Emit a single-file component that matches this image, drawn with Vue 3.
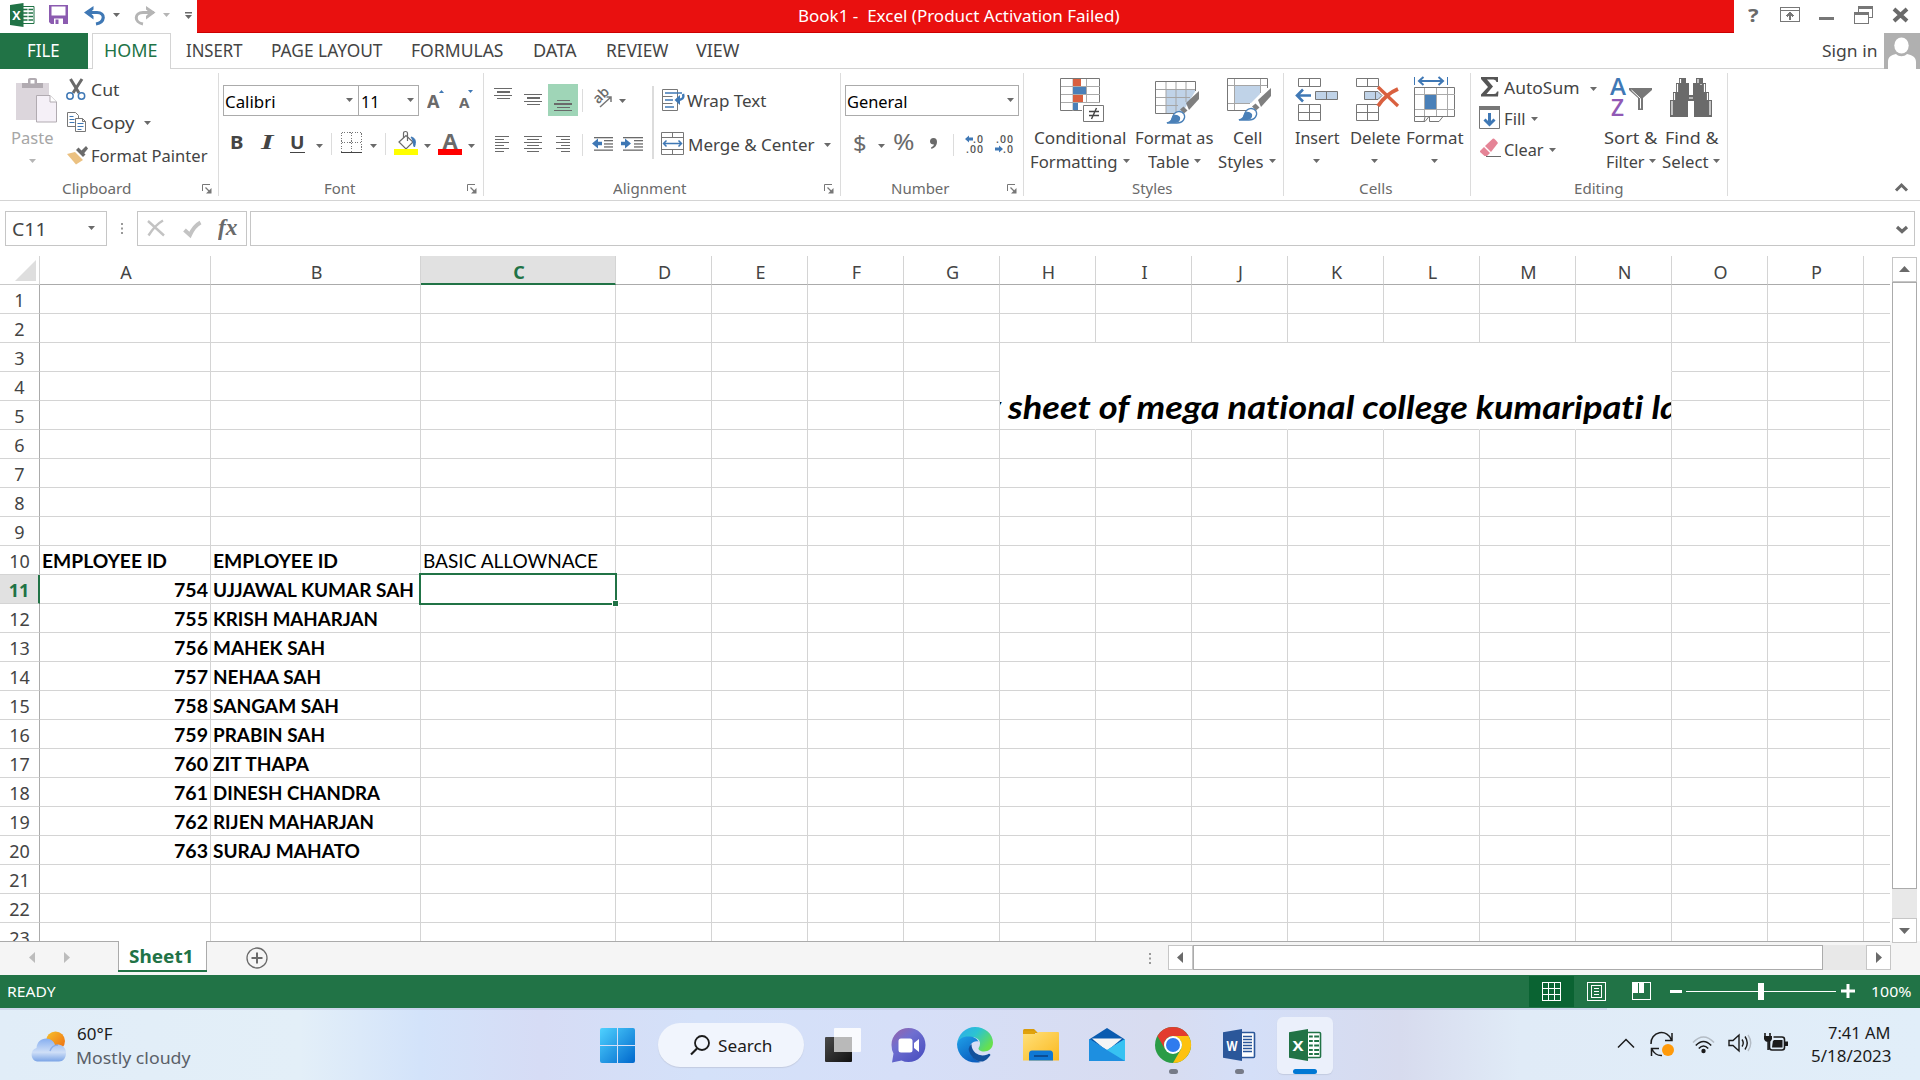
<script setup>
import { h, onMounted, ref } from 'vue'

const root = ref(null)

/* ---------- layout helpers: leaves carry page coordinates, rows and columns turn them into margins ---------- */
const ASC = 1.069
const DESC = 0.293
function T(text, x, w, base, size = 17, cls = '') {
  const a = Math.round(size * ASC)
  const d = Math.round(size * DESC)
  const y = Math.round(base - a - (20 - a - d) / 2)
  // one pixel of side bearing on the left of the ink
  return { kind: 'text', text, x: x - 1, y, w: w + 1.5, h: 20, size, cls }
}
const I = (svg, x, y, w, hh, cls = '') => ({ kind: 'icon', svg, x, y, w, h: hh, cls })
const C = (x, y, cls = '') => I('<path d="M0 0h7L3.5 4z" fill="currentColor"/>', x, y, 7, 4, 'caret ' + cls)
const S = (x, y, hh, w = 1) => ({ kind: 'box', x, y, w, h: hh, cls: 'sep', kids: [] })
function group(dir, kids, cls = '', box) {
  const b = box || {}
  const x = b.x ?? Math.min(...kids.map((k) => k.x))
  const y = b.y ?? Math.min(...kids.map((k) => k.y))
  const w = b.w ?? Math.max(...kids.map((k) => k.x + k.w)) - x
  const hh = b.h ?? Math.max(...kids.map((k) => k.y + k.h)) - y
  return { kind: 'box', dir, kids, cls, x, y, w, h: hh }
}
const H = (...kids) => group('row', kids)
const V = (...kids) => group('col', kids)
const box = (dir, cls, x, y, w, hh, ...kids) => group(dir, kids, cls, { x, y, w, h: hh })

function draw(n, ml, mt) {
  const style = { marginLeft: ml + 'px', marginTop: mt + 'px', width: n.w + 'px', height: n.h + 'px' }
  if (n.kind === 'text') {
    return h('span', { class: ['t', n.cls], style: { ...style, fontSize: n.size + 'px' } }, [
      h('span', { class: 'fit', 'data-w': n.w }, n.text),
    ])
  }
  if (n.kind === 'icon') {
    return h('svg', { class: ['i', n.cls], style, viewBox: `0 0 ${n.w} ${n.h}`, innerHTML: n.svg })
  }
  let cur = n.dir === 'col' ? n.y : n.x
  const kids = n.kids.map((k) => {
    if (n.dir === 'col') {
      const v = draw(k, k.x - n.x, k.y - cur)
      cur = k.y + k.h
      return v
    }
    const v = draw(k, k.x - cur, k.y - n.y)
    cur = k.x + k.w
    return v
  })
  return h('div', { class: ['n', n.dir, n.cls], style }, kids)
}
const Node = (p) => draw(p.of, 0, 0)
Node.props = ['of']

/* ---------- icons ---------- */
const hl = (rows, c = '#6a6a6a') =>
  rows.map(([x, y, w]) => `<rect x="${x}" y="${y}" width="${w}" height="1.3" fill="${c}"/>`).join('')
const officeX = (c, letter, sheet) =>
  `<path d="M18 3.5h12.5a1 1 0 0 1 1 1v23a1 1 0 0 1-1 1H18z" fill="#fff" stroke="${c}" stroke-width="1.6"/>${sheet}<path d="M0 3.2L19 0v32L0 28.8z" fill="${c}"/><text x="9" y="21.5" text-anchor="middle" font-family="Open Sans,sans-serif" font-weight="700" font-size="15" textLength="11" lengthAdjust="spacingAndGlyphs" fill="#fff">${letter}</text>`
const excelSheet = '<path d="M20 7.5h10M20 12h10M20 16.500h10M20 21h10M20 25h10" stroke="#217346" stroke-width="2"/><path d="M24.500 5v22" stroke="#fff" stroke-width="1.4"/>'
const wordSheet = '<path d="M20 7.500h9M20 10.500h9M20 13.500h9M20 16.500h9M20 19.500h9M20 22.500h9" stroke="#2b579a" stroke-width="1.4"/>'
const launcher = '<path d="M.5 7V.5H8" fill="none" stroke="#777"/><path d="M3.500 3.500L7 7" stroke="#777" stroke-width="1.200"/><path d="M9.500 4v5.500H4z" fill="#777"/>'
const brush = '<path d="M31 12L44 0v8L34 19z" fill="#7f7f7f"/><path d="M28.500 15.500l4 4-3.500 3-4-4z" fill="#7f7f7f"/><path d="M12 32c4-1 5-3 6-7 2-5 8-6 11-2 2 4-1 9-7 9z" fill="#fff" stroke="#4a80b8" stroke-width="1.300"/><path d="M11 32c5-1 5-3 6-6 2-3 5-3 8 0 1 5-3 6-6 6z" fill="#4a80b8"/>'
const ic = {
  excel: '<path d="M12 3.500h12v17H12z" fill="#fff" stroke="#217346"/><path d="M13 6.500h10M13 10h10M13 13.500h10M13 17h10" stroke="#217346" stroke-width="1.500"/><path d="M18 4v16" stroke="#fff"/><path d="M0 2l13.500-2v24L0 22z" fill="#217346"/><text x="6.500" y="16.500" text-anchor="middle" font-family="Open Sans,sans-serif" font-weight="700" font-size="12.500" fill="#fff">X</text>',
  save: '<path d="M0 0h19v19H2l-2-2z" fill="#8b5bb0"/><path d="M2.500 1.500h14v9h-14z" fill="#fff"/><path d="M5 13.500h9V19H5z" fill="#fff"/><path d="M6.500 14.500h3V19h-3z" fill="#8b5bb0"/>',
  undo: '<path d="M2 6.500h11c9 0 8 10-1 11.500" fill="none" stroke="#3f78b5" stroke-width="3.200"/><path d="M9.500 0v3.500L6 6.500l3.500 3.500v3.500L0 6.500z" fill="#3f78b5"/>',
  redo: '<path d="M20 6.500H9c-9 0-9 10 0 11.500" fill="none" stroke="#b5b5b5" stroke-width="3"/><path d="M12 0v3.500l3.500 3L12 10v3.500l9.500-7z" fill="#b5b5b5"/>',
  custom: '<path d="M0 0h7v1.500H0zM0 3h7L3.500 7z" fill="#6a6a6a"/>',
  ribbonOpt: '<path d="M.500.500h19v14H.500zM.500 3.500h19" fill="none" stroke="#777"/><path d="M10 13V6M6.500 9.500L10 6l3.500 3.500" fill="none" stroke="#777" stroke-width="2"/>',
  restore: '<path d="M4.500 6V.500h14v11H15" fill="none" stroke="#777"/><path d="M4 1.500h15" stroke="#777" stroke-width="2"/><path d="M.500 6.500h14v11H.500z" fill="#fff" stroke="#777"/><path d="M0 7.500h15" stroke="#777" stroke-width="2"/>',
  close: '<path d="M1 1l13 12M14 1L1 13" stroke="#6a6a6a" stroke-width="4"/>',
  user: '<rect width="36" height="36" fill="#b0b0b0"/><ellipse cx="17.500" cy="12.500" rx="7.200" ry="8" fill="#fff"/><path d="M4 36V29c0-5 3-7 8-8 3 3 8 3 11 0 5 1 9 3 9 8v7z" fill="#fff"/>',
  paste: '<path d="M0 5h33v37H0z" fill="#dcd6dc"/><path d="M6 5h6V1.500Q12 0 14 0h5q2 0 2 1.500V5h6v5H6z" fill="#b1abb1"/><rect x="14.500" y="2" width="4" height="3.500" fill="#fff"/><path d="M20.500 17.500H34l6.500 6.500v20h-20z" fill="#f5f0f7" stroke="#b1abb1"/><path d="M34 17.500V24h6.500" fill="#fff" stroke="#b1abb1"/>',
  cut: '<path d="M4.500 0l8.500 14M16 0L7 14" stroke="#6a6a6a" stroke-width="3"/><circle cx="4" cy="17" r="3.200" fill="#fff" stroke="#3f78b5" stroke-width="1.500"/><circle cx="15.500" cy="17" r="3.200" fill="#fff" stroke="#3f78b5" stroke-width="1.500"/>',
  copy: '<path d="M.500.500h8l3 3v11h-11z" fill="#fff" stroke="#777"/><path d="M2.500 4.500h4M2.500 7.500h5M2.500 10.500h5" stroke="#3f78b5"/><path d="M8.500 6.500h7l3 3v10h-10z" fill="#fff" stroke="#777"/><path d="M15.500 6.500v3h3" fill="none" stroke="#777"/><path d="M10.500 11.500h6M10.500 14.500h6M10.500 17.500h4" stroke="#3f78b5"/>',
  painter: '<path d="M0 8l8-2 8 8-7 4.500z" fill="#ebc181"/><path d="M9 4l2.500-2.500 7 7L16 11z" fill="#6a6a6a"/><path d="M14 5l5-5 2 2.500-4 5z" fill="#6a6a6a"/>',
  up: '<path d="M0 3h5L2.500 0z" fill="#3f78b5"/>',
  down: '<path d="M0 0h5L2.500 3z" fill="#3f78b5"/>',
  borders: '<path d="M.500.500h20v20M.500.500v20M10.500.500v20M.500 10.500h20" fill="none" stroke="#777" stroke-dasharray="1.300 1.300"/><path d="M0 20.500h21" stroke="#444" stroke-width="1.500"/>',
  fill: '<path d="M5 11l7-6.500 7 6.500-7 7z" fill="#fff" stroke="#6a6a6a" stroke-width="1.200"/><path d="M9.500 7V2.500q0-2 2-2t2 2V10" fill="none" stroke="#6a6a6a" stroke-width="1.200"/><path d="M17 6c5 1 5 5 3.500 10-2-2 0-5-3.500-10" fill="#3f78b5" stroke="#3f78b5"/><rect y="18" width="24" height="6" fill="#ff0"/>',
  fontColor: '<text x="12" y="15.500" text-anchor="middle" font-family="Open Sans,sans-serif" font-weight="700" font-size="22" fill="#6a6a6a">A</text><rect y="16" width="24" height="6" fill="#f00"/>',
  alTop: hl([[0, 0, 18], [2.500, 3.300, 13], [0, 6.600, 18], [2.500, 9.600, 13]]),
  alBot: '<rect width="30" height="32" fill="#9fd5b7"/>' + hl([[8.500, 16, 13], [6, 19.300, 18], [8.500, 22.600, 13], [6, 25.600, 18]]),
  alMid: hl([[0, 0, 18], [2.500, 3.300, 13], [0, 6.600, 18], [2.500, 9.600, 13]]),
  left: hl([[0, 0, 14], [0, 3, 9], [0, 6, 14], [0, 9, 9], [0, 12, 14], [0, 15, 9]]),
  center: hl([[0, 0, 18], [3, 3, 12], [0, 6, 18], [3, 9, 12], [0, 12, 18], [3, 15, 12]]),
  right: hl([[0, 0, 14], [5, 3, 9], [0, 6, 14], [5, 9, 9], [0, 12, 14], [5, 15, 9]]),
  orient: '<text x="3" y="14" transform="rotate(-45 6 12)" font-family="Open Sans,sans-serif" font-weight="600" font-size="14" fill="#6a6a6a">ab</text><path d="M7 18L18 8M13.500 8H18v5" fill="none" stroke="#777" stroke-width="1.500"/>',
  dec: hl([[2, 0, 19], [12, 3, 9], [12, 6.300, 9], [12, 9.300, 9], [2, 12.500, 19]]) + '<path d="M0 6.500L6 1.500v3.200h4v3.600H6v3.200z" fill="#3f78b5"/>',
  inc: hl([[2, 0, 20], [13, 3, 9], [13, 6.300, 9], [13, 9.300, 9], [2, 12.500, 20]]) + '<path d="M10 6.500L4 1.500v3.200H0v3.600h4v3.200z" fill="#3f78b5"/>',
  wrap: '<path d="M.500.500h15v21H.500z" fill="#fff" stroke="#777"/><path d="M.500 7.500h10M.500 14.500h10" stroke="#777"/><path d="M3 4h17M3 11h8M3 18h9" stroke="#3f78b5" stroke-width="1.300"/><path d="M21 5q2 6-6 6" fill="none" stroke="#3f78b5" stroke-width="2.400"/><path d="M12.500 11l5.500-5v10z" fill="#3f78b5"/>',
  merge: '<path d="M.500.500h22v22H.500zM.500 5.500h22M.500 17.500h22M11.500.500v5M11.500 17.500v5" fill="#fff" stroke="#777"/><path d="M2.500 11.500h18M5.500 8.500l-3 3 3 3M17.500 8.500l3 3-3 3" fill="none" stroke="#3f78b5" stroke-width="1.500"/>',
  comma: '<path d="M3.500 0Q7 0 7 4 7 9 1.500 11L1 9.500Q4 8 4 6.500 0 6.500 0 3.500 0 0 3.500 0z" fill="#6a6a6a"/>',
  decInc: '<path d="M0 5L4 1.500v2h4v3H4v2z" fill="#3f78b5"/><text x="8" y="8.500" font-family="Open Sans,sans-serif" font-weight="600" font-size="10.500" fill="#555" textLength="10">.0</text><text x="1" y="18.500" font-family="Open Sans,sans-serif" font-weight="600" font-size="10.500" fill="#555" textLength="17">.00</text>',
  decDec: '<text x="1" y="8.500" font-family="Open Sans,sans-serif" font-weight="600" font-size="10.500" fill="#555" textLength="17">.00</text><path d="M8 15L4 11.500v2H0v3h4v2z" fill="#3f78b5"/><text x="8" y="18.500" font-family="Open Sans,sans-serif" font-weight="600" font-size="10.500" fill="#555" textLength="10">.0</text>',
  cond: '<path d="M.500.500h39v32H.500z" fill="#fff" stroke="#777"/><path d="M13 1v32M26.500 1v32M1 8.500h39M1 16.500h39M1 24.500h39" stroke="#aaa"/><path d="M13 1h8v7h-8zM13 17h10v7H13z" fill="#d9603f"/><path d="M13 9h13v7H13zM13 25h5v7h-5z" fill="#4a80b8"/><path d="M22 25h23v20H22z" fill="#fff"/><path d="M23.500 27.500h20v16h-20z" fill="#fff" stroke="#777"/><path d="M29 33.500h10M29 37.500h10M36.500 30l-5 11" stroke="#444" stroke-width="1.400"/>',
  asTable: '<path d="M.500.500h40v32H.500z" fill="#fff"/><path d="M11 9h30L27 32H11z" fill="#c0d3e8"/><path d="M.500 32.500V.500h40V10M.500 32.500h22" fill="none" stroke="#777"/><path d="M11 1v31M21 1v31M31 1v20M1 8.500h39M1 16.500h34M1 24.500h22" stroke="#a5a5a5"/><g transform="translate(0 10)">' + brush + '</g>',
  cellStyle: '<path d="M.500.500h40v32H.500z" fill="#fff"/><path d="M8 8h25v8L24 25H8z" fill="#c0d3e8"/><path d="M.500 32.500V.500h40V10M.500 32.500h20" fill="none" stroke="#777"/><path d="M7.500 1v31M33.500 1v14M1 7.500h39M1 25.500h22" stroke="#a5a5a5"/><g transform="translate(0 10)">' + brush + '</g>',
  insert: '<path d="M3.500.500h22v8h-22zM14.500.500v8M3.500 26.500h22v16h-22zM14.500 26.500v16M3.500 34.500h22" fill="#fff" stroke="#777"/><path d="M20.500 13.500h22v8h-22zM31.500 13.500v8" fill="#c0d3e8" stroke="#777"/><path d="M2 17.500h14M8 11.500l-6 6 6 6" fill="none" stroke="#3f78b5" stroke-width="2.600"/>',
  del: '<path d="M.500.500h22v8H.500zM11.500.500v8M.500 26.500h22v16H.500zM11.500 26.500v16M.500 34.500h22" fill="#fff" stroke="#777"/><path d="M8.500 13.500H22l4 4-4 4H8.500zM19.500 13.500v8" fill="#c0d3e8" stroke="#777"/><path d="M22 9L42 28" stroke="#d9603f" stroke-width="3.200"/><path d="M42 11Q30 16 22 28" fill="none" stroke="#d9603f" stroke-width="4"/>',
  format: '<path d="M.500 0v8M33.500 0v8" stroke="#3f78b5"/><path d="M5 4h24M9.500 0l-4.500 4 4.500 4M24.500 0l4.500 4-4.500 4" fill="none" stroke="#3f78b5" stroke-width="2"/><path d="M.500 10.500h40v29H.500z" fill="#fff" stroke="#777"/><path d="M10.500 11v28M22.500 11v28M33.500 11v28M1 17.500h40M1 32.500h40" stroke="#aaa"/><rect x="11" y="18" width="11" height="14" fill="#4a80b8"/><path d="M.500 40v4.500H11l4-5M11 40l-1 4.500h-3M15.500 40v4.500H25l4-5" fill="none" stroke="#777"/>',
  sigma: '<path d="M0 0h17v5h-1.500q-.500-2.500-3-2.500H6l6 7L5.500 17H13q2.500 0 3-2.500H17.500L17 19.500H0v-2l7-7.500L0 2z" fill="#555"/>',
  fillDown: '<path d="M.500.500h20v22H.500z" fill="#fff" stroke="#777"/><rect width="21" height="4" fill="#777"/><path d="M10.500 7v12M5.500 13.500l5 5 5-5" fill="none" stroke="#3f78b5" stroke-width="3"/>',
  clear: '<path d="M1 13l4-4 6 6-3 3H5.500L1 14z" fill="#e58496"/><path d="M6 8l8-7.500q1.500-.500 5 4.500L12 14z" fill="#e58496"/><path d="M7 18.500h15" stroke="#6a6a6a"/>',
  sort: '<text x="0" y="17" font-family="Open Sans,sans-serif" font-weight="600" font-size="23.500" fill="#3f78b5" textLength="16" lengthAdjust="spacingAndGlyphs">A</text><text x="1" y="38" font-family="Open Sans,sans-serif" font-weight="600" font-size="23.500" fill="#9159b5" textLength="13" lengthAdjust="spacingAndGlyphs">Z</text><path d="M19 10h23v2l-9 8v12h-5V20l-9-8z" fill="#777"/><path d="M21.500 12l9 8.500v10" fill="none" stroke="#fff"/>',
  find: '<path d="M9 0h7v5h3v11h4V5h3V0h7v5h3v9h3v8h3v17H24V23h-6v16H0V22h3v-8h3V5h3z" fill="#6a6a6a"/><path d="M10.500 1v4M7.500 6v8M4.500 15v7M2 23v14M28 1v4M31 6v1M34.500 6v8M37.500 15v7M40 23v14M19 16.500h4M19 20h4" stroke="#fff" stroke-width="1.200"/>',
  chevUp: '<path d="M1 8.500L6.500 3 12 8.500" fill="none" stroke="#6a6a6a" stroke-width="3"/>',
  chevDown: '<path d="M1 1l5 4.500L11 1" fill="none" stroke="#6a6a6a" stroke-width="3.200"/>',
  dots: '<path d="M0 0h2v2H0zM0 4.500h2v2H0zM0 9h2v2H0z" fill="#999"/>',
  cancel: '<path d="M1 1l16 14.500M16 .500Q8 5 1.500 15.500" stroke="#c3c3c3" stroke-width="2.400" fill="none"/>',
  check: '<path d="M1.500 9l5.500 5Q11 5 17.500 1.500" stroke="#c3c3c3" stroke-width="4" fill="none"/>',
  corner: '<path d="M21 0v21H0z" fill="#dedede"/>',
  tl: '<path d="M6 0v11L0 5.500z" fill="currentColor"/>',
  tr: '<path d="M0 0v11l6-5.500z" fill="currentColor"/>',
  plus: '<circle cx="11" cy="11" r="10" fill="none" stroke="#6a6a6a" stroke-width="1.300"/><path d="M11 5.500v11M5.500 11h11" stroke="#6a6a6a" stroke-width="2"/>',
  vNormal: '<path d="M.500.500h18v18H.500zM6.500.500v18M12.500.500v18M.500 6.500h18M.500 12.500h18" fill="none" stroke="#fff"/>',
  vPage: '<path d="M.500.500h18v18H.500zM4.500 3.500h10v12h-10zM7 6.500h5M7 9.500h5M7 12.500h5" fill="none" stroke="#fff"/>',
  vBreak: '<path d="M.500.500h18v17H.500z" fill="none" stroke="#fff"/><path d="M0 0h5.500v11H0zM6.500 0H12v11H6.500z" fill="#fff"/>',
  weather: '<defs><linearGradient id="wc" x1="0" y1="0" x2="0" y2="1"><stop offset="0" stop-color="#86aef0"/><stop offset=".6" stop-color="#cfdff7"/><stop offset="1" stop-color="#7ba4e6"/></linearGradient><linearGradient id="ws" x1="0" y1="0" x2="1" y2="1"><stop offset="0" stop-color="#f7c32e"/><stop offset="1" stop-color="#ee6a10"/></linearGradient></defs><circle cx="25.500" cy="10" r="9.500" fill="url(#ws)"/><path d="M7 30.500a7 7 0 0 1-.500-13.500C7 11 11 7.500 16 7.500c5 0 8 3 9 6.500 6-2 11 2 11 8 0 5-3 8.500-7 8.500z" fill="url(#wc)"/><path d="M20 20q2-6 8-6" stroke="#6f98e2" stroke-width="1.500" fill="none" opacity=".6"/>',
  win: '<defs><linearGradient id="wn" gradientUnits="userSpaceOnUse" x1="0" y1="0" x2="35" y2="35"><stop offset="0" stop-color="#4fd2ff"/><stop offset="1" stop-color="#0067cc"/></linearGradient></defs><path d="M2 0h15v17H0V2q0-2 2-2zM18 0h15q2 0 2 2v15H18zM0 18h17v17H2q-2 0-2-2zM18 18h17v15q0 2-2 2H18z" fill="url(#wn)"/>',
  mag: '<circle cx="12" cy="8" r="7" fill="none" stroke="#1b1b1b" stroke-width="1.800"/><path d="M7 13.500L1 19.500" stroke="#1b1b1b" stroke-width="2.200"/>',
  taskView: '<defs><linearGradient id="tv" x1="0" y1="0" x2="1" y2="1"><stop offset="0" stop-color="#4a4a4a"/><stop offset="1" stop-color="#111"/></linearGradient></defs><rect y="9" width="27" height="25" rx="1" fill="url(#tv)"/><rect x="9" width="27" height="24" rx="1" fill="#fff" opacity=".85"/><rect x="9" y="9" width="18" height="15" fill="#b9b9b9"/>',
  chat: '<defs><linearGradient id="ch" x1="0" y1="0" x2=".8" y2="1"><stop offset="0" stop-color="#9d62a6"/><stop offset=".4" stop-color="#6f6fd0"/><stop offset="1" stop-color="#4a4fc0"/></linearGradient></defs><path d="M17.500 0C27 0 34.500 7.500 34.500 17S27 34 17.500 34q-4 0-7-1.500L1 34.500l1.500-9Q.500 22 .500 17C.500 7.500 8 0 17.500 0z" fill="url(#ch)"/><rect x="7.500" y="10.500" width="14" height="14" rx="2.500" fill="#fff"/><path d="M23 15l5-4v13l-5-4z" fill="#fff"/>',
  edge: '<defs><linearGradient id="e1" x1="0" y1="0" x2="1" y2=".6"><stop offset="0" stop-color="#2fa8ee"/><stop offset=".5" stop-color="#2cc3d2"/><stop offset="1" stop-color="#67e04e"/></linearGradient><linearGradient id="e2" x1="0" y1="0" x2=".6" y2="1"><stop offset="0" stop-color="#1fa0e8"/><stop offset="1" stop-color="#0b5fc0"/></linearGradient></defs><path d="M0 17C1 7 9 0 18 0c10 0 18 7 18 15.500 0 6-4.500 9-9 9-4 0-5.500-1.800-5.500-3 0-1 1.500-2 1.500-5C23 13 20 10 14 10 7 10 1 13 0 17z" fill="url(#e1)"/><path d="M0 17C1 12 6 9.500 11 9.500c6 0 9 2 10.500 5-6-1-9 3-8.500 8 .500 6 5 11 11 12.500C11 38 0 29 0 17z" fill="url(#e2)"/><path d="M14.500 17q-5 4-1 10.500 5 8 12.500 7 4-1.500 7.500-6.500-1-2-3-.500-7 2.500-12-1.500-4-3.500-4-9z" fill="#12509c"/>',
  folder: '<defs><linearGradient id="fo" x1="0" y1="0" x2="1" y2="1"><stop offset="0" stop-color="#ffe07a"/><stop offset="1" stop-color="#fbb91f"/></linearGradient></defs><path d="M0 1.500Q0 0 1.500 0H11l4 4H0z" fill="#d99b0b"/><path d="M0 5h12l4-2h19q1 0 1 1v27.500H0z" fill="url(#fo)"/><path d="M0 5V2h13l-1 3z" fill="#e0a20d"/><path d="M6 31.500V25q0-3.500 3-3.500h18q3 0 3 3.500v6.500z" fill="#0f78d4"/><path d="M11 27h14" stroke="#0b4d94" stroke-width="2"/>',
  mail: '<path d="M0 11.500L18 0l18 11.500L18 22z" fill="#0a5bb0"/><path d="M3 10.500h30L18 23z" fill="#f5f5f5"/><path d="M0 11l18 11 18-11v22H0z" fill="#2196e0"/><path d="M0 11l36 22H0z" fill="#1e8fe0"/><path d="M18 22l18-11v22z" fill="#37c2f2"/>',
  chrome: '<circle cx="18" cy="18" r="18" fill="#2a9c46"/><path d="M2.400 9A18 18 0 0 1 33.600 9H18a9 9 0 0 0-7.800 13.500z" fill="#e33b2e"/><path d="M33.600 9A18 18 0 0 1 18 36l7.800-13.500A9 9 0 0 0 25.800 13.500L18 9z" fill="#fdc20f"/><circle cx="18" cy="18" r="9" fill="#fff"/><circle cx="18" cy="18" r="7" fill="#2f7bee"/>',
  word: officeX('#2b579a', 'W', wordSheet),
  excelBig: officeX('#217346', 'X', excelSheet),
  trayUp: '<path d="M1 9.500L9 1.500l8 8" fill="none" stroke="#1b1b1b" stroke-width="1.500"/>',
  sync: '<path d="M1 12A10.500 10.500 0 0 1 21.500 8M22 1v7.500h-7M12 23.500A10 10 0 0 1 2 17M1.500 24v-7.500H9" fill="none" stroke="#1b1b1b" stroke-width="1.500"/><circle cx="18" cy="18" r="6" fill="#ff9a0a"/>',
  wifi: '<g fill="none" stroke-width="1.600"><path d="M1 7.500q10.500-11 21 0" stroke="#b4bcc5"/><path d="M3.800 10.500q7.700-8 15.400 0M6.800 13.500q4.700-5 9.400 0" stroke="#1b1b1b"/></g><circle cx="11.500" cy="16" r="2.200" fill="#1b1b1b"/>',
  sound: '<path d="M1 6.500h4L11 1v16l-6-5.500H1z" fill="none" stroke="#1b1b1b" stroke-width="1.400"/><path d="M14 5.500q2.500 3.500 0 7M17 2.500q4.500 6.500 0 13" fill="none" stroke="#1b1b1b" stroke-width="1.400"/><path d="M20 1q5.500 8 0 16" fill="none" stroke="#b4bcc5" stroke-width="1.400"/>',
  battery: '<rect x="5.500" y="4" width="15" height="13" rx="2.500" fill="none" stroke="#1b1b1b" stroke-width="1.600"/><path d="M9 7h9.500v7.500H8z" fill="#1b1b1b"/><path d="M21 8.500h3v4.500h-3z" fill="#1b1b1b"/><path d="M-.500 2h10v6H-.500z" fill="#e3edf8"/><path d="M1 0v3M6 0v3" stroke="#1b1b1b" stroke-width="1.600"/><path d="M0 3h8v3q-1 3-4 3t-4-3zM3.300 9h1.600v8H3.300z" fill="#1b1b1b"/>',
}

/* ---------- bars ---------- */
const titlebar = box('row', 'titlebar', 0, 0, 1920, 33,
  I(ic.excel, 10, 3, 24, 24), I(ic.save, 49, 5, 19, 19), I(ic.undo, 84, 6, 23, 19), C(113, 13), I(ic.redo, 134, 6, 22, 19), C(163, 13, 'dim'),
  I(ic.custom, 185, 12, 7, 7),
  box('row', 'red', 197, 0, 1537, 33, T('Book1 -  Excel (Product Activation Failed)', 799, 320, 22, 16, 'white')),
  T('?', 1749, 9, 22, 18, 'bold grey'), I(ic.ribbonOpt, 1780, 7, 20, 15, 'crisp'), box('row', 'minbar', 1819, 17, 15, 3), I(ic.restore, 1854, 6, 20, 19, 'crisp'),
  I(ic.close, 1893, 8, 15, 14))

const tabs = box('row', 'tabs', 0, 33, 1920, 36,
  box('row', 'file', 0, 33, 88, 36, T('FILE', 28, 31, 57, 18, 'white')),
  box('row', 'home', 92, 33, 79, 36, T('HOME', 105, 52, 57, 18, 'green')),
  T('INSERT', 187, 55, 57, 18), T('PAGE LAYOUT', 272, 110, 57, 18), T('FORMULAS', 412, 91, 57, 18), T('DATA', 534, 42, 57, 18),
  T('REVIEW', 607, 61, 57, 18), T('VIEW', 697, 42, 57, 18),
  T('Sign in', 1823, 54, 57, 17), I(ic.user, 1884, 33, 36, 36))

const L = (t, x, w) => T(t, x, w, 194, 15, 'label')
const launch = (x) => I(launcher, x, 184, 10, 10)

const ribbon = box('row', 'ribbon', 0, 69, 1920, 132,
  // Clipboard
  V(
    H(
      V(I(ic.paste, 16, 78, 41, 45), T('Paste', 12, 41, 144, 17, 'dimtext'), C(29, 159, 'dim')),
      V(
        H(I(ic.cut, 66, 79, 20, 21), T('Cut', 92, 27, 96)),
        H(I(ic.copy, 67, 112, 19, 20), T('Copy', 92, 42, 129), C(144, 121)),
        H(I(ic.painter, 67, 146, 21, 19), T('Format Painter', 92, 115, 162)),
      ),
    ),
    H(L('Clipboard', 63, 68), launch(202)),
  ),
  S(218, 73, 123),
  // Font
  V(
    H(
      box('row', 'combo', 223, 85, 136, 31, T('Calibri', 226, 49, 108, 17, 'black'), C(346, 98)),
      box('row', 'combo second', 358, 85, 61, 31, T('11', 362, 17, 108, 17, 'black'), C(407, 98)),
      T('A', 428, 11, 108, 17, 'bold grey'), I(ic.up, 439, 90, 5, 3), T('A', 460, 9, 108, 14, 'bold grey'), I(ic.down, 468, 90, 5, 3),
    ),
    H(
      T('B', 231, 12, 149, 18, 'bold'), T('I', 262, 11, 149, 20, 'ital'), T('U', 291, 13, 149, 18, 'bold under'), C(316, 144), S(331, 133, 22),
      I(ic.borders, 341, 132, 21, 21, 'crisp'), C(370, 144), S(385, 133, 22), I(ic.fill, 394, 131, 24, 24), C(424, 144),
      I(ic.fontColor, 438, 133, 24, 22), C(468, 144),
    ),
    H(L('Font', 325, 30), launch(467)),
  ),
  S(483, 73, 123),
  // Alignment
  V(
    H(
      V(
        H(I(ic.alTop, 494, 88, 18, 11, 'crisp'), I(ic.alMid, 524, 94, 18, 11, 'crisp'), I(ic.alBot, 548, 84, 30, 32, 'crisp'), S(582, 89, 23), I(ic.orient, 593, 89, 20, 20), C(619, 99)),
        H(I(ic.left, 495, 136, 14, 17, 'crisp'), I(ic.center, 524, 136, 18, 17, 'crisp'), I(ic.right, 556, 136, 14, 17, 'crisp'), S(582, 134, 22), I(ic.dec, 592, 137, 21, 14), I(ic.inc, 621, 137, 22, 14)),
      ),
      S(652, 86, 73, 2),
      V(
        H(I(ic.wrap, 662, 89, 23, 23), T('Wrap Text', 688, 78, 107)),
        H(I(ic.merge, 661, 132, 23, 23), T('Merge & Center', 689, 125, 151), C(824, 143)),
      ),
    ),
    H(L('Alignment', 614, 72), launch(824)),
  ),
  S(840, 73, 123),
  // Number
  V(
    box('row', 'combo', 845, 85, 174, 31, T('General', 848, 59, 108, 17, 'black'), C(1007, 98)),
    H(T('$', 854, 12, 151, 22, 'grey'), C(878, 144), T('%', 894, 20, 150, 21, 'grey'), I(ic.comma, 930, 138, 7, 11), S(953, 134, 22), I(ic.decInc, 965, 134, 19, 20), I(ic.decDec, 995, 134, 19, 20)),
    H(L('Number', 892, 57), launch(1007)),
  ),
  S(1023, 73, 123),
  // Styles
  V(
    H(
      V(I(ic.cond, 1060, 78, 45, 45), T('Conditional', 1035, 91, 144), H(T('Formatting', 1031, 86, 168), C(1123, 159))),
      V(I(ic.asTable, 1155, 81, 45, 43), T('Format as', 1136, 77, 144), H(T('Table', 1149, 40, 168), C(1194, 159))),
      V(I(ic.cellStyle, 1227, 78, 45, 43), T('Cell', 1234, 28, 144), H(T('Styles', 1219, 44, 168), C(1269, 159))),
    ),
    L('Styles', 1133, 39),
  ),
  S(1283, 73, 123),
  // Cells
  V(
    H(
      V(I(ic.insert, 1295, 78, 44, 43), T('Insert', 1296, 43, 144), C(1313, 159)),
      V(I(ic.del, 1356, 78, 44, 43), T('Delete', 1351, 49, 144), C(1371, 159)),
      V(I(ic.format, 1414, 77, 42, 45), T('Format', 1407, 56, 144), C(1431, 159)),
    ),
    L('Cells', 1360, 32),
  ),
  S(1470, 73, 123),
  // Editing
  V(
    H(
      V(
        H(I(ic.sigma, 1481, 77, 18, 20), T('AutoSum', 1505, 74, 94), C(1590, 87)),
        H(I(ic.fillDown, 1479, 106, 21, 23), T('Fill', 1505, 20, 125), C(1531, 117)),
        H(I(ic.clear, 1479, 138, 22, 20), T('Clear', 1505, 38, 156), C(1549, 148)),
      ),
      V(I(ic.sort, 1610, 78, 42, 39), T('Sort &', 1605, 52, 144), H(T('Filter', 1607, 37, 168), C(1649, 159))),
      V(I(ic.find, 1670, 78, 42, 39), T('Find &', 1666, 52, 144), H(T('Select', 1663, 45, 168), C(1713, 159))),
    ),
    L('Editing', 1575, 48),
  ),
  S(1727, 73, 123),
  I(ic.chevUp, 1895, 182, 13, 11))

const formula = box('row', 'formula', 0, 201, 1920, 55,
  box('row', 'field', 5, 211, 102, 35, T('C11', 13, 33, 236, 18), C(88, 226)),
  I(ic.dots, 121, 223, 2, 11),
  box('row', 'field', 137, 211, 110, 35, I(ic.cancel, 147, 220, 18, 16), I(ic.check, 183, 221, 19, 16), T('fx', 219, 18, 236, 24, 'fx')),
  box('row', 'field', 250, 211, 1665, 35, I(ic.chevDown, 1896, 226, 12, 8)))

/* ---------- sheet ---------- */
const cols = 'ABCDEFGHIJKLMNOPQ'.split('').map((n) => ({ n, w: { A: 171, B: 210, C: 195, Q: 27 }[n] || 96 }))
const names = [
  ['754', 'UJJAWAL KUMAR SAH', 201], ['755', 'KRISH MAHARJAN', 165], ['756', 'MAHEK SAH', 112], ['757', 'NEHAA SAH', 108],
  ['758', 'SANGAM SAH', 126], ['759', 'PRABIN SAH', 112], ['760', 'ZIT THAPA', 96], ['761', 'DINESH CHANDRA', 167],
  ['762', 'RIJEN MAHARJAN', 161], ['763', 'SURAJ MAHATO', 147],
]
const cellText = { A10: ['EMPLOYEE ID', 125, 'b'], B10: ['EMPLOYEE ID', 125, 'b'], C10: ['BASIC ALLOWNACE', 175, ''] }
names.forEach(([id, name, w], i) => {
  cellText['A' + (11 + i)] = [id, 34, 'b num']
  cellText['B' + (11 + i)] = [name, w, 'b']
})
const rows = Array.from({ length: 23 }, (_, i) => i + 1)
const inMerge = (c, r) => r >= 3 && r <= 5 && c >= 'H' && c <= 'N'

const sheetbar = box('row', 'sheetbar', 0, 941, 1920, 34,
  I(ic.tl, 29, 952, 6, 11, 'faint'), I(ic.tr, 64, 952, 6, 11, 'faint'),
  box('row', 'sheettab', 118, 941, 89, 31, T('Sheet1', 130, 63, 963, 18, 'bold green')),
  I(ic.plus, 246, 947, 22, 22),
  I(ic.dots, 1149, 953, 2, 11),
  box('row', 'sbtn', 1168, 945, 25, 25, I(ic.tl, 1177, 952, 6, 11)),
  box('row', 'thumb', 1193, 945, 630, 25),
  box('row', 'track', 1823, 945, 43, 25),
  box('row', 'sbtn', 1866, 945, 25, 25, I(ic.tr, 1876, 952, 6, 11)))

const vscroll = box('col', 'vscroll', 1890, 256, 30, 685,
  box('row', 'sbtn', 1892, 257, 25, 25, I('<path d="M0 6h11L5.500 0z" fill="currentColor"/>', 1899, 266, 11, 6)),
  box('row', 'thumb', 1892, 282, 25, 607),
  box('row', 'track', 1892, 889, 25, 29),
  box('row', 'sbtn', 1892, 918, 25, 25, I('<path d="M0 0h11L5.500 6z" fill="currentColor"/>', 1899, 928, 11, 6)))

const status = box('row', 'status', 0, 975, 1920, 33,
  T('READY', 8, 47, 997, 15, 'white'),
  box('row', 'viewon', 1529, 976, 45, 31, I(ic.vNormal, 1542, 982, 19, 19, 'crisp')),
  I(ic.vPage, 1587, 982, 19, 19, 'crisp'), I(ic.vBreak, 1632, 982, 19, 18, 'crisp'),
  box('row', 'wh', 1670, 990, 12, 3), box('row', 'wh', 1686, 991, 72, 1), box('row', 'wh', 1758, 983, 6, 17), box('row', 'wh', 1764, 991, 72, 1),
  I('<path d="M7 0v14M0 7h14" stroke="#fff" stroke-width="3"/>', 1841, 984, 14, 14), T('100%', 1872, 39, 997, 15, 'white'))

const taskbar = box('row', 'taskbar', 0, 1008, 1920, 72,
  I(ic.weather, 30, 1031, 36, 31),
  V(T('60°F', 78, 34, 1040, 17, 'ink'), T('Mostly cloudy', 77, 113, 1064, 17, 'soft')),
  I(ic.win, 600, 1028, 35, 35),
  box('row', 'pill', 658, 1023, 146, 44, I(ic.mag, 690, 1035, 20, 21), T('Search', 719, 53, 1052, 17, 'ink')),
  I(ic.taskView, 825, 1028, 36, 34), I(ic.chat, 891, 1028, 35, 35), I(ic.edge, 957, 1027, 36, 36), I(ic.folder, 1023, 1029, 36, 32),
  I(ic.mail, 1089, 1028, 36, 33),
  V(I(ic.chrome, 1155, 1027, 36, 36), box('row', 'dot', 1169, 1069, 9, 5)),
  V(I(ic.word, 1223, 1029, 32, 32), box('row', 'dot', 1235, 1069, 9, 5)),
  box('col', 'active', 1277, 1017, 56, 57, I(ic.excelBig, 1289, 1029, 32, 32), box('row', 'dot blue', 1293, 1069, 24, 5)),
  I(ic.trayUp, 1617, 1038, 18, 11), I(ic.sync, 1650, 1032, 25, 25), I(ic.wifi, 1692, 1035, 23, 19), I(ic.sound, 1728, 1034, 24, 19),
  I(ic.battery, 1764, 1033, 24, 19),
  V(T('7:41 AM', 1829, 61, 1039, 17, 'ink'), T('5/18/2023', 1812, 79, 1062, 17, 'ink')))

/* Squeeze each string to its designed width. */
onMounted(() => {
  root.value.querySelectorAll('.fit').forEach((el) => {
    const w = el.getBoundingClientRect().width
    if (w) el.style.transform = `scaleX(${Number(el.dataset.w) / w})`
  })
})
</script>

<template>
  <main ref="root" class="app">
    <Node :of="titlebar" />
    <Node :of="tabs" />
    <Node :of="ribbon" />
    <Node :of="formula" />
    <section class="sheet">
      <div class="grid">
        <div class="line heads">
          <div class="corner"><svg width="21" height="21" viewBox="0 0 21 21" v-html="ic.corner" /></div>
          <div v-for="c in cols" :key="c.n" class="head" :class="{ on: c.n === 'C' }" :style="{ width: c.w + 'px' }">
            {{ c.n === 'Q' ? '' : c.n }}
          </div>
        </div>
        <div v-for="r in rows" :key="r" class="line">
          <div class="rowno" :class="{ on: r === 11 }">{{ r }}</div>
          <div
            v-for="c in cols"
            :key="c.n"
            class="cell"
            :class="{
              noright: inMerge(c.n, r) && c.n !== 'N',
              nobottom: inMerge(c.n, r) && r < 5,
            }"
            :style="{ width: c.w + 'px' }"
          >
            <span v-if="cellText[c.n + r]" class="val" :class="cellText[c.n + r][2]" :style="{ width: cellText[c.n + r][1] + 'px' }">
              <span class="fit" :data-w="cellText[c.n + r][1]">{{ cellText[c.n + r][0] }}</span>
            </span>
            <span v-if="c.n === 'C' && r === 11" class="select"><i></i></span>
            <span v-if="c.n === 'H' && r === 3" class="merged">
              <span class="fit" data-w="696">y sheet of mega national college kumaripati la</span>
            </span>
          </div>
        </div>
      </div>
      <Node :of="vscroll" />
    </section>
    <Node :of="sheetbar" />
    <Node :of="status" />
    <Node :of="taskbar" />
  </main>
</template>

<style>
html,
body {
  margin: 0;
  background: #fff;
}
</style>

<style scoped>
.app {
  width: 1920px;
  height: 1080px;
  overflow: hidden;
  display: flex;
  flex-direction: column;
  background: #fff;
  color: #444;
  font-family: "Noto Sans", "Open Sans", sans-serif;
  font-variant-ligatures: none;
}
.app :deep(.n) {
  display: flex;
  flex: none;
  box-sizing: border-box;
  align-items: flex-start;
}
.app :deep(.col) {
  flex-direction: column;
}
.app :deep(.t) {
  flex: none;
  display: block;
  line-height: 20px;
  white-space: pre;
}
.app :deep(.fit) {
  display: inline-block;
  white-space: pre;
  transform-origin: 0 50%;
}
.app :deep(.i) {
  flex: none;
  display: block;
  overflow: visible;
  color: #6a6a6a;
}
.app :deep(.crisp) {
  shape-rendering: crispEdges;
}
.app :deep(.i.dim) {
  color: #b5b5b5;
}
.app :deep(.i.faint) {
  color: #bcbcbc;
}
.app :deep(.sep) {
  background: #dcdcdc;
}
.app :deep(.white) {
  color: #fff;
}
.app :deep(.black) {
  color: #000;
}
.app :deep(.green) {
  color: #217346;
}
.app :deep(.grey) {
  color: #6a6a6a;
}
.app :deep(.dimtext) {
  color: #a6a6a6;
}
.app :deep(.label) {
  color: #6a6a6a;
}
.app :deep(.ink) {
  color: #1b1b1b;
}
.app :deep(.soft) {
  color: #5a6068;
}
.app :deep(.bold) {
  font-weight: 700;
}
.app :deep(.ital) {
  font-family: "Liberation Serif", serif;
  font-style: italic;
  font-weight: 700;
}
.app :deep(.fx) {
  font-family: "Liberation Serif", serif;
  font-style: italic;
  font-weight: 700;
  color: #6a6a6a;
}
.app :deep(.under) {
  border-bottom: 1px solid #444;
}
.app :deep(.red) {
  background: #e9100f;
  border-bottom: 1px solid #c00;
}
.app :deep(.minbar) {
  background: #777;
}
.app :deep(.tabs) {
  background: linear-gradient(#d4d4d4, #d4d4d4) 0 100% / 100% 1px no-repeat;
}
.app :deep(.file) {
  background: #217346;
}
.app :deep(.home) {
  background: #fff;
  box-shadow: inset 1px 1px #d4d4d4, inset -1px 0 #d4d4d4;
}
.app :deep(.ribbon) {
  border-bottom: 1px solid #d4d4d4;
}
.app :deep(.combo) {
  box-shadow: inset 0 0 0 1px #ababab;
}
.app :deep(.field) {
  box-shadow: inset 0 0 0 1px #c6c6c6;
}
.sheet {
  display: flex;
  height: 685px;
  flex: none;
  position: relative;
}
.grid {
  width: 1890px;
  height: 685px;
  overflow: hidden;
  flex: none;
}
.line {
  display: flex;
  height: 29px;
}
.corner,
.rowno,
.head,
.cell {
  box-sizing: border-box;
  flex: none;
}
.corner {
  width: 40px;
  padding: 4px 0 0 15px;
  border-right: 1px solid #d4d4d4;
  border-bottom: 1px solid #c9c9c9;
}
.head {
  font-size: 18px;
  line-height: 32px;
  padding-left: 2px;
  text-align: center;
  border-right: 1px solid #d4d4d4;
  border-bottom: 1px solid #ababab;
}
.head.on {
  background: #e1e1e1;
  color: #217346;
  font-weight: 700;
  border-bottom: 2px solid #217346;
}
.rowno {
  width: 40px;
  font-size: 18px;
  line-height: 30px;
  text-align: center;
  border-right: 1px solid #ababab;
  border-bottom: 1px solid #d4d4d4;
}
.rowno.on {
  background: #e1e1e1;
  color: #217346;
  font-weight: 700;
  border-right: 2px solid #217346;
}
.cell {
  position: relative;
  border-right: 1px solid #d4d4d4;
  border-bottom: 1px solid #d4d4d4;
}
.cell:last-child {
  border-right-color: #ababab;
}
.noright {
  border-right-color: transparent;
}
.nobottom {
  border-bottom-color: transparent;
}
.val {
  display: block;
  margin-left: 2px;
  font: 400 19px/29px Lato, sans-serif;
  color: #000;
  white-space: nowrap;
}
.val.b {
  font-weight: 700;
}
.val.num {
  margin-left: auto;
  margin-right: 2px;
}
.select {
  position: absolute;
  left: -2px;
  top: -2px;
  width: 194px;
  height: 28px;
  border: 2px solid #217346;
  z-index: 2;
}
.select i {
  position: absolute;
  right: -3px;
  bottom: -3px;
  width: 5px;
  height: 5px;
  background: #217346;
  box-shadow: 0 0 0 1px #fff;
}
.merged {
  position: absolute;
  left: 0;
  top: 0;
  width: 671px;
  height: 86px;
  overflow: hidden;
  z-index: 2;
  font: italic 700 32px/40px Lato, sans-serif;
  font-variant-ligatures: none;
  color: #000;
  padding-top: 44px;
  box-sizing: border-box;
}
.merged .fit {
  margin-left: -17px;
}
.app :deep(.vscroll) {
  background: #fff;
}
.app :deep(.sbtn) {
  background: #fff;
  box-shadow: inset 0 0 0 1px #c6c6c6;
}
.app :deep(.thumb) {
  background: #fff;
  box-shadow: inset 0 0 0 1px #ababab;
}
.app :deep(.track) {
  background: #e8e8e8;
}
.app :deep(.sheetbar) {
  background: linear-gradient(90deg, #ababab 1890px, #f5f5f5 1890px) 0 0 / 100% 1px no-repeat, #f5f5f5;
}
.app :deep(.sheettab) {
  background: #fff;
  box-shadow: inset 1px 0 #ababab, inset -1px 0 #ababab;
  border-bottom: 2px solid #217346;
}
.app :deep(.status) {
  background: #217346;
}
.app :deep(.viewon) {
  background: #0a6332;
}
.app :deep(.wh) {
  background: #fff;
}
.app :deep(.taskbar) {
  background:
    linear-gradient(90deg, rgba(190, 195, 225, 0.5) 1607px, transparent 1607px) 0 0 / 100% 2px no-repeat,
    linear-gradient(90deg, #e1edf8 0, #e3eff8 300px, #d3e3fa 420px, #d6dcf5 540px, #d4e1f9 700px, #d6dff8 900px, #d8dcf0 1160px, #d4dff8 1250px, #d7dbee 1400px, #e0ebf7 1520px, #e1eef9 1920px);
}
.app :deep(.pill) {
  border-radius: 22px;
  background: #f1f5fd;
  box-shadow: 0 1px 1px #c3cbe0;
}
.app :deep(.active) {
  border-radius: 6px;
  background: #ebf0fb;
  box-shadow: 0 1px 1px #c3cbe0;
}
.app :deep(.dot) {
  border-radius: 3px;
  background: #767b88;
}
.app :deep(.blue) {
  background: #0078d4;
}
</style>
